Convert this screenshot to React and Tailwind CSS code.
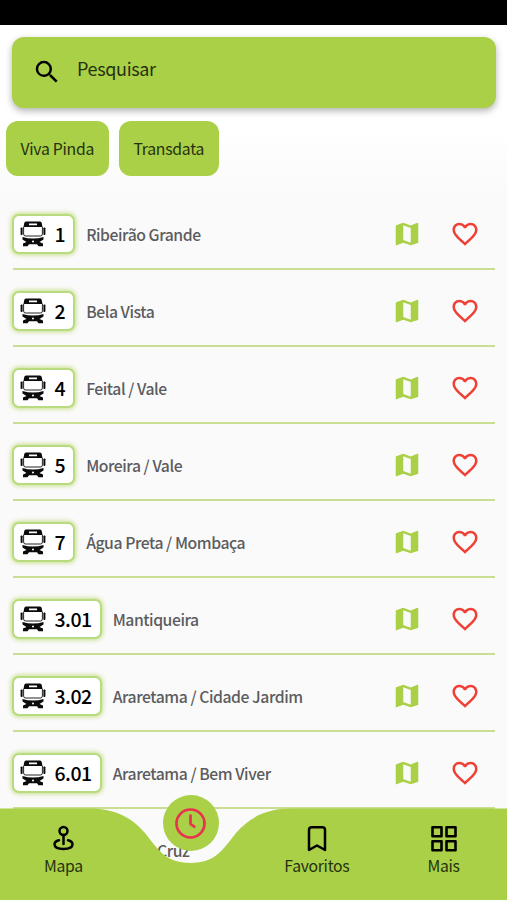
import React, { useState } from 'react'
import { MdFavoriteBorder, MdMap, MdSearch } from 'react-icons/md'

const COMPANIES = ['Viva Pinda', 'Transdata']

const LINES = [
  { number: '1', name: 'Ribeirão Grande' },
  { number: '2', name: 'Bela Vista' },
  { number: '4', name: 'Feital / Vale' },
  { number: '5', name: 'Moreira / Vale' },
  { number: '7', name: 'Água Preta / Mombaça' },
  { number: '3.01', name: 'Mantiqueira' },
  { number: '3.02', name: 'Araretama / Cidade Jardim' },
  { number: '6.01', name: 'Araretama / Bem Viver' },
]

export default function App() {
  const [search, setSearch] = useState('')

  return (
    <div className="relative flex h-[900px] w-[507px] flex-col overflow-hidden bg-[#fafafa] font-['Noto_Sans_CJK_JP','Noto_Sans',sans-serif]">
      {/* Status bar */}
      <div className="h-[25px] shrink-0 bg-black" />

      {/* Search and filters */}
      <header className="h-[171px] shrink-0 bg-linear-to-b from-white from-60% to-[#fafafa] pt-3">
        <label className="mr-[11px] ml-3 flex h-[71px] items-center rounded-xl bg-[#a9d046] pl-5 shadow-[0_3px_7px_rgba(0,0,0,0.3)]">
          <MdSearch className="mb-0.5 size-[30px] text-black" />
          <input
            className="mb-[9px] ml-[15px] flex-1 bg-transparent text-[18px] tracking-[-0.35px] text-[#263010] outline-none placeholder:text-[#263010]"
            placeholder="Pesquisar"
            value={search}
            onChange={(e) => setSearch(e.target.value)}
          />
        </label>
        <div className="mt-[13px] ml-1.5 flex gap-2.5">
          {COMPANIES.map((c) => (
            <button key={c} className="h-[55px] rounded-xl bg-[#a9d046] pr-[15px] pl-[14.5px] text-[15.75px] tracking-[-0.27px] text-[#263010]">
              {c}
            </button>
          ))}
        </div>
      </header>

      {/* Bus lines */}
      <ul className="-mt-[3px] shrink-0">
        {LINES.map((line) => (
          <LineRow key={line.number} {...line} />
        ))}
        <li className="flex h-[77px] items-center pt-[7px] pl-[157px] text-[15.75px] font-medium tracking-[-0.45px] text-[#5c5c60]">Cruz</li>
      </ul>

      <BottomNav />
    </div>
  )
}

function LineRow({ number, name }) {
  return (
    <li className="mr-3 ml-[13px] flex h-[77px] items-center border-b-2 border-[#c9de93] pt-[7px]">
      <span className="-ml-[1.5px] flex h-[40px] items-center gap-[9px] rounded-[7px] border-2 border-[#b9db80] bg-white pr-[8px] pl-[6px] shadow-[0_0_4px_1px_rgba(169,208,70,0.65)]">
        <BusIcon />
        <span className="pb-px text-[19.5px] leading-none font-medium tracking-[-0.5px] text-black">{number}</span>
      </span>
      <span className="ml-[11px] pt-[2px] text-[15.75px] font-medium tracking-[-0.45px] text-[#5c5c60]">{name}</span>
      <MdMap className="mr-[28.5px] ml-auto size-[30px] text-[#a9d046]" />
      <MdFavoriteBorder className="mr-[15px] size-[30px] text-[#ee4035]" />
    </li>
  )
}

function BottomNav() {
  return (
    <nav className="absolute inset-x-0 bottom-0 h-[92px]">
      <svg className="absolute inset-0" width="507" height="92" viewBox="0 0 507 92">
        <path
          fill="#a9d046"
          d="M0 .6H90C115 .6 132 10 145 25C158 41 165 55 190.500 55C216 55 223 41 236 25C249 10 266 .6 291 .6H507V92H0Z"
        />
      </svg>
      <div className="relative grid h-full grid-cols-4">
        <NavItem label="Mapa" icon={<SpotIcon />} />
        <div className="flex justify-center pl-px">
          <button className="-mt-[13px] flex size-14 items-center justify-center rounded-full bg-[#a9d046]">
            <ClockIcon />
          </button>
        </div>
        <NavItem label="Favoritos" icon={<BookmarkIcon />} />
        <NavItem label="Mais" icon={<GridIcon />} />
      </div>
    </nav>
  )
}

function NavItem({ label, icon }) {
  return (
    <button className="flex flex-col items-center pt-4 text-black">
      {icon}
      <span className="mt-0.5 text-[15.75px] leading-6 tracking-[-0.3px] text-[#263010]">{label}</span>
    </button>
  )
}

function BusIcon() {
  return (
    <svg width="26" height="26" viewBox="0 0 26 26" fill="#0b0b0b">
      {/* roof with destination sign */}
      <path fillRule="evenodd" d="M6 .5h14q1.500 0 1.800 1.700l.7 3.800h-19l.7-3.800Q4.500 .5 6 .5ZM9 2.400v1.800h8V2.400Z" />
      <path d="M3.600 6v7q0 2 2 2h14.800q2 0 2-2V6" fill="none" stroke="#0b0b0b" strokeWidth=".9" />
      {/* mirrors */}
      <rect x=".6" y="6.500" width="2" height="7.500" rx=".8" />
      <rect x="23.400" y="6.500" width="2" height="7.500" rx=".8" />
      {/* bumper and wheels */}
      <path fillRule="evenodd" d="M2.500 16q5 1.500 10.500 1.500T23.500 16v2.600L19.500 21l3.500 1.600v2.600h-4.500L17 23.300H9l-1.500 1.900H3v-2.600L6.500 21l-4-2.400ZM13 19.500a1 1 0 1 0 0 2 1 1 0 0 0 0-2Z" />
    </svg>
  )
}

function SpotIcon() {
  return (
    <svg width="28" height="28" viewBox="0 0 28 28" fill="none" stroke="currentColor" strokeWidth="2.500" strokeLinecap="round">
      <circle cx="14.500" cy="7" r="4" />
      <path d="M14.500 11v9" />
      <path d="M10 16.200C7 17 5.500 18.500 5.500 20.300c0 3 4 4.600 9 4.600s9-1.600 9-4.600c0-1.800-1.500-3.300-4.500-4.100" />
    </svg>
  )
}

function ClockIcon() {
  return (
    <svg width="32" height="32" viewBox="0 0 32 32" fill="none" stroke="#e8334f" strokeWidth="2.700" strokeLinecap="round" strokeLinejoin="round">
      <circle cx="15.500" cy="16.500" r="14" />
      <path d="M15.500 8.500v8.500l3.800 2.700" />
    </svg>
  )
}

function BookmarkIcon() {
  return (
    <svg width="28" height="28" viewBox="0 0 28 28" fill="none" stroke="currentColor" strokeWidth="2.500" strokeLinejoin="round">
      <path d="M6 26V6q0-2.700 2.700-2.700h10.600q2.700 0 2.700 2.700v20l-8-4.500Z" />
    </svg>
  )
}

function GridIcon() {
  return (
    <svg width="28" height="28" viewBox="0 0 28 28" fill="none" stroke="currentColor" strokeWidth="2.600" strokeLinejoin="round">
      <rect x="2.500" y="3.300" width="9" height="9" />
      <rect x="16.500" y="3.300" width="9" height="9" />
      <rect x="2.500" y="17.300" width="9" height="9" />
      <rect x="16.500" y="17.300" width="9" height="9" />
    </svg>
  )
}
